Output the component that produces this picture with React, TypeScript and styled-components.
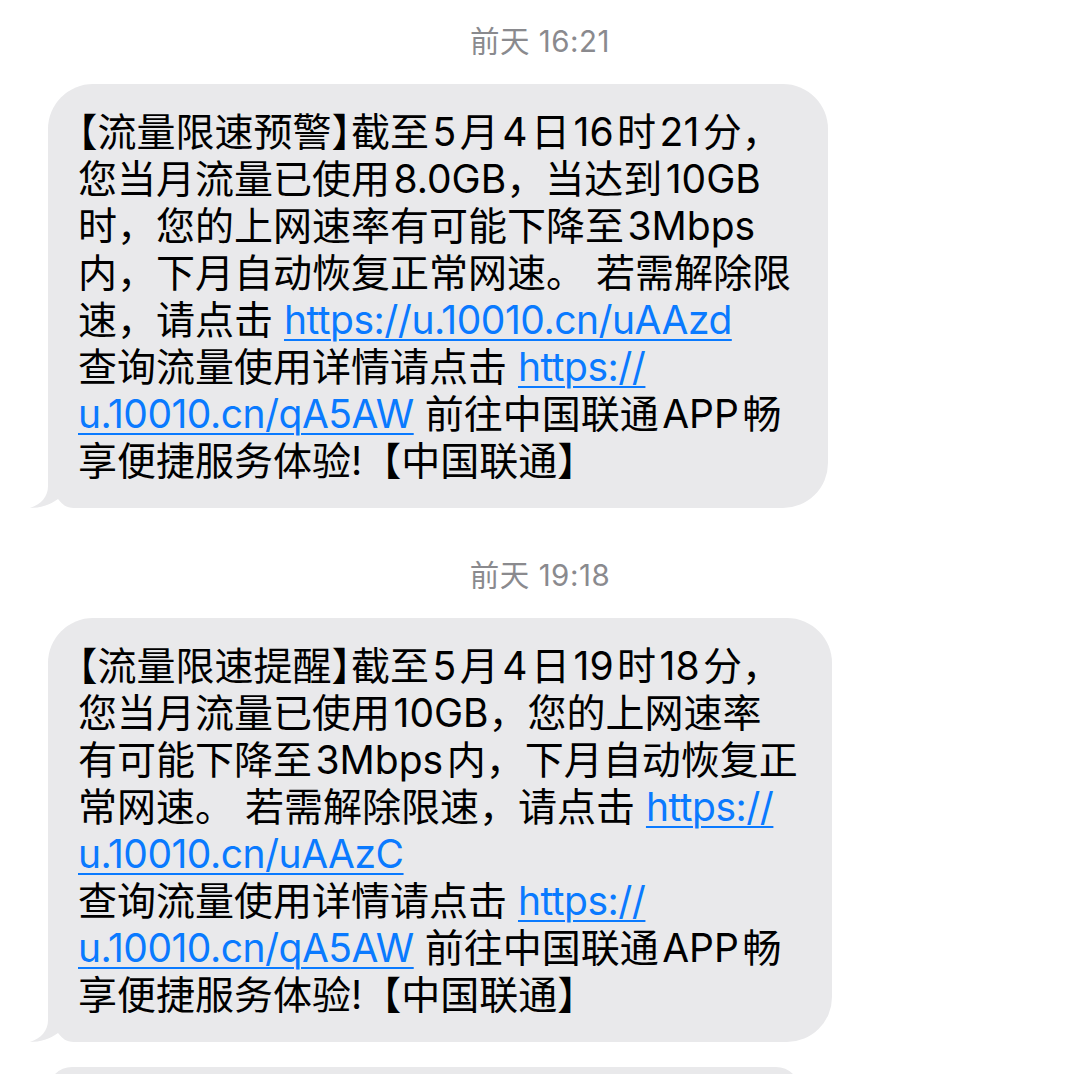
import React from 'react'
import styled, { createGlobalStyle } from 'styled-components'

const GlobalStyle = createGlobalStyle`
  html, body {
    margin: 0;
    padding: 0;
    background: #ffffff;
  }
  body {
    font-family: Inter, "Noto Sans CJK SC", sans-serif;
    -webkit-font-smoothing: antialiased;
  }
`

const Thread = styled.div`
  width: 1080px;
  height: 1074px;
  overflow: hidden;
  box-sizing: border-box;
  padding-top: 24px;
  display: flex;
  flex-direction: column;
`

const Group = styled.section`
  display: flex;
  flex-direction: column;
  align-items: flex-start;

  & + & {
    margin-top: 50px;
  }
`

const Stamp = styled.div`
  align-self: stretch;
  text-align: center;
  font-size: 29.5px;
  letter-spacing: 0.5px;
  line-height: 34px;
  color: #8a8a8e;
  margin-bottom: 26px;
`

const Bubble = styled.div<{ $width: number }>`
  position: relative;
  box-sizing: border-box;
  width: ${(p) => p.$width}px;
  margin-left: 48px;
  padding: 24px 30px;
  background: #e9e9eb;
  border-radius: 45px;
  color: #000000;
  font-size: 39px;
  line-height: 47px;
`

const Peek = styled(Bubble)`
  margin-top: 25px;
  height: 120px;
`

const Line = styled.div`
  position: relative;
  white-space: nowrap;
`

const Half = styled.span`
  font-feature-settings: "halt";
`

// latin run set a little apart from the han characters around it
const Latin = styled.span<{ $before: boolean; $after: boolean }>`
  margin-left: ${(p) => (p.$before ? '3.5px' : '0')};
  margin-right: ${(p) => (p.$after ? '3.5px' : '0')};
`

const Link = styled.a`
  color: #0a7aff;
  letter-spacing: -0.5px;
  text-decoration: underline;
  text-decoration-thickness: 2px;
  text-underline-offset: 5px;
`

const Tail = styled.svg`
  position: absolute;
  left: -20px;
  bottom: 0;
  width: 70px;
  height: 50px;
`

type Seg = string | { link: string } | { half: string }
type Msg = { time: string; width: number; lines: Seg[][] }

const messages: Msg[] = [
  {
    time: '前天 16:21',
    width: 780,
    lines: [
      [{ half: '【' }, '流量限速预警', { half: '】' }, '截至5月4日16时21分，'],
      ['您当月流量已使用8.0GB，当达到10GB'],
      ['时，您的上网速率有可能下降至3Mbps'],
      ['内，下月自动恢复正常网速。 若需解除限'],
      ['速，请点击 ', { link: 'https://u.10010.cn/uAAzd' }],
      ['查询流量使用详情请点击 ', { link: 'https://' }],
      [{ link: 'u.10010.cn/qA5AW' }, ' 前往中国联通APP畅'],
      ['享便捷服务体验!【中国联通', { half: '】' }],
    ],
  },
  {
    time: '前天 19:18',
    width: 784,
    lines: [
      [{ half: '【' }, '流量限速提醒', { half: '】' }, '截至5月4日19时18分，'],
      ['您当月流量已使用10GB，您的上网速率'],
      ['有可能下降至3Mbps内，下月自动恢复正'],
      ['常网速。 若需解除限速，请点击 ', { link: 'https://' }],
      [{ link: 'u.10010.cn/uAAzC' }],
      ['查询流量使用详情请点击 ', { link: 'https://' }],
      [{ link: 'u.10010.cn/qA5AW' }, ' 前往中国联通APP畅'],
      ['享便捷服务体验!【中国联通', { half: '】' }],
    ],
  },
]

const han = /[\u4e00-\u9fff]/

const renderText = (s: string) => {
  const parts = s.split(/([A-Za-z0-9.]+)/)
  return parts.map((part, k) => {
    if (k % 2 === 0) return part
    const prev = parts[k - 1].slice(-1)
    const next = (parts[k + 1] || '').charAt(0)
    return (
      <Latin key={k} $before={han.test(prev)} $after={han.test(next)}>
        {part}
      </Latin>
    )
  })
}

const renderSeg = (seg: Seg, j: number) => {
  if (typeof seg === 'string') return <span key={j}>{renderText(seg)}</span>
  if ('link' in seg)
    return (
      <Link key={j} href="#">
        {seg.link}
      </Link>
    )
  return <Half key={j}>{seg.half}</Half>
}

const BubbleTail = () => (
  <Tail viewBox="0 0 70 50">
    <path
      d="M20 0 L20 28 C20 38 14 46 2 50 C12 50 22 47 30 41 C34 46 38 50 46 50 L70 50 L70 0 Z"
      fill="#e9e9eb"
    />
  </Tail>
)

const App = () => {
  return (
    <>
      <GlobalStyle />
      <Thread>
        {messages.map((m) => (
          <Group key={m.time}>
            <Stamp>{m.time}</Stamp>
            <Bubble $width={m.width}>
              <BubbleTail />
              {m.lines.map((line, i) => (
                <Line key={i}>{line.map(renderSeg)}</Line>
              ))}
            </Bubble>
          </Group>
        ))}
        <Peek $width={752} />
      </Thread>
    </>
  )
}

export default App
